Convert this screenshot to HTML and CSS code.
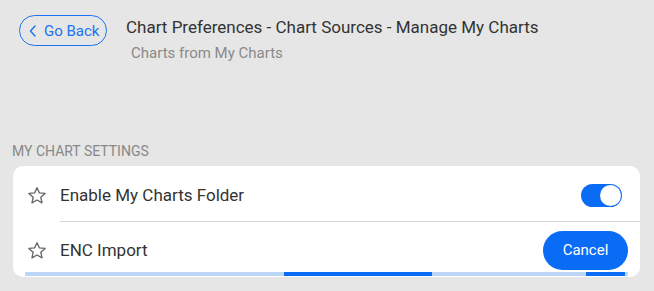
FILE: index.html
```html
<!DOCTYPE html>
<html lang="en">
<head>
  <meta charset="UTF-8">
  <title>Manage My Charts</title>
  <link rel="stylesheet" href="styles.css">
</head>
<body>
  <div class="header">
    <button class="back-btn">
      <svg width="8" height="12" viewBox="0 0 8 12"><path d="M6 1 L1.5 6 L6 11" fill="none" stroke="#1a73f0" stroke-width="1.4" stroke-linecap="round" stroke-linejoin="round"/></svg>
      Go Back
    </button>
    <div class="titles">
      <h1>Chart Preferences - Chart Sources - Manage My Charts</h1>
      <p>Charts from My Charts</p>
    </div>
  </div>

  <div class="section-label">MY CHART SETTINGS</div>

  <div class="card">
    <div class="row">
      <svg class="star" width="20" height="19" viewBox="0 0 24 23"><path d="M12 2 L14.9 8.3 L21.8 9 L16.6 13.6 L18.1 20.4 L12 16.9 L5.9 20.4 L7.4 13.6 L2.2 9 L9.1 8.3 Z" fill="none" stroke="#666" stroke-width="1.6" stroke-linejoin="round"/></svg>
      <span class="label">Enable My Charts Folder</span>
      <span class="toggle on"><span class="knob"></span></span>
    </div>
    <div class="row last">
      <svg class="star" width="20" height="19" viewBox="0 0 24 23"><path d="M12 2 L14.9 8.3 L21.8 9 L16.6 13.6 L18.1 20.4 L12 16.9 L5.9 20.4 L7.4 13.6 L2.2 9 L9.1 8.3 Z" fill="none" stroke="#666" stroke-width="1.6" stroke-linejoin="round"/></svg>
      <span class="label">ENC Import</span>
      <button class="cancel-btn">Cancel</button>
    </div>
    <div class="progress">
      <span class="seg" style="left: 42.95%; width: 24.55%;"></span>
      <span class="seg" style="left: 93.03%; width: 6.47%;"></span>
    </div>
  </div>
</body>
</html>
```

FILE: styles.css
```css
* {
  box-sizing: border-box;
  margin: 0;
  padding: 0;
}

body {
  font-family: Roboto, "Noto Sans", sans-serif;
  background: #e6e6e6;
  color: #333;
  height: 100vh;
  overflow: hidden;
}

.header {
  display: flex;
  align-items: flex-start;
  padding: 15px 0 0 19px;
}

.back-btn {
  display: flex;
  align-items: center;
  gap: 7px;
  width: 88px;
  height: 31px;
  padding-left: 9px;
  border: 1.5px solid #1a73f0;
  border-radius: 16px;
  background: transparent;
  color: #1a73f0;
  font-family: inherit;
  font-size: 15px;
}

.titles {
  margin-left: 19px;
}

.titles h1 {
  font-size: 17px;
  font-weight: 400;
  color: #333;
  line-height: 24px;
}

.titles p {
  margin: 3px 0 0 5px;
  font-size: 15px;
  color: #8a8a8a;
  line-height: 22px;
}

.section-label {
  margin: 78px 0 0 12px;
  font-size: 14px;
  color: #888;
  line-height: 18px;
}

.card {
  position: relative;
  margin: 6px 14px 0 13px;
  height: 111px;
  background: white;
  border-radius: 10px;
}

.row {
  display: flex;
  align-items: center;
  height: 56px;
  padding: 2px 18px 0 14px;
  position: relative;
}

.row::after {
  content: "";
  position: absolute;
  left: 47px;
  right: 0;
  bottom: 0;
  border-bottom: 1px solid #d6d6d6;
}

.row.last {
  height: 50px;
  padding: 6px 12px 0 14px;
}

.row.last::after {
  display: none;
}

.star {
  flex-shrink: 0;
}

.label {
  flex: 1;
  margin-left: 13px;
  font-size: 17px;
}

.toggle {
  width: 41px;
  height: 23px;
  border-radius: 12px;
  background: #0a6cf5;
  position: relative;
}

.knob {
  position: absolute;
  right: 1px;
  top: 1px;
  width: 21px;
  height: 21px;
  border-radius: 50%;
  background: white;
}

.cancel-btn {
  width: 85px;
  height: 39px;
  border: none;
  border-radius: 20px;
  background: #0a6cf5;
  color: white;
  font-family: inherit;
  font-size: 15px;
}

.progress {
  position: relative;
  margin: 0 12px 0 12px;
  height: 4px;
  background: #bcd7f6;
}

.seg {
  position: absolute;
  top: 0;
  height: 4px;
  background: #0a6cf5;
}
```
